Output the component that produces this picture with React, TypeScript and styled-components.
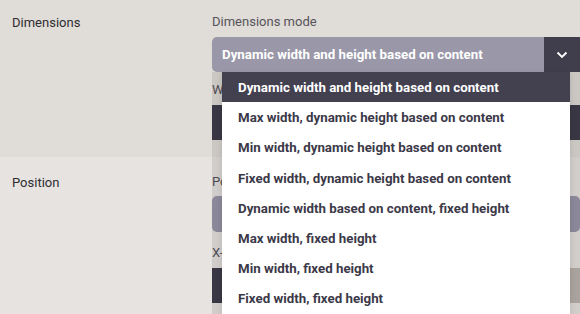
import React from "react";
import styled, { createGlobalStyle } from "styled-components";

const Global = createGlobalStyle`
  html, body { margin: 0; padding: 0; }
  body { font-family: Roboto, "Noto Sans", sans-serif; background: #e7e3e0; }
`;

const Page = styled.div`
  position: relative;
  width: 580px;
  height: 314px;
  overflow: hidden;
`;

const Section = styled.section<{ $bg: string; $pt: number }>`
  display: grid;
  grid-template-columns: 200px 1fr;
  background: ${(p) => p.$bg};
  padding: ${(p) => p.$pt}px 0 17px 12px;
`;

const SectionTitle = styled.div`
  font-size: 13px;
  line-height: 16px;
  padding-top: 1px;
  color: #2e2d31;
`;

const Fields = styled.div`
  display: flex;
  flex-direction: column;
`;

const FieldLabel = styled.div<{ $mt?: number; $mb?: number }>`
  font-size: 13px;
  line-height: 16px;
  color: #56535b;
  margin-top: ${(p) => p.$mt ?? 0}px;
  margin-bottom: ${(p) => p.$mb ?? 7}px;
`;

const SelectWrap = styled.div`
  position: relative;
  z-index: 3;
`;

const SelectBox = styled.div`
  display: flex;
  height: 35px;
  border-radius: 5px 0 0 5px;
  overflow: hidden;
`;

const SelectValue = styled.div`
  flex: 1;
  display: flex;
  align-items: center;
  padding-left: 10px;
  background: #9a97a9;
  color: #ffffff;
  font-size: 13.3px;
  font-weight: 700;
`;

const Chevron = styled.div`
  width: 36px;
  display: flex;
  align-items: center;
  justify-content: center;
  background: #403d4c;
`;

const Menu = styled.ul`
  position: absolute;
  top: 100%;
  left: 10px;
  right: 10px;
  margin: 0;
  padding: 0;
  list-style: none;
  background: #ffffff;
  box-shadow: 0 2px 6px rgba(0, 0, 0, 0.12);
`;

const MenuItem = styled.li<{ $active?: boolean }>`
  height: 30.2px;
  box-sizing: border-box;
  padding-top: 1px;
  display: flex;
  align-items: center;
  padding-left: 16px;
  font-size: 13.3px;
  font-weight: 700;
  color: ${(p) => (p.$active ? "#ffffff" : "#3c3948")};
  background: ${(p) => (p.$active ? "#434050" : "transparent")};
`;

const DarkInput = styled.div`
  height: 35px;
  background: #403d4c;
  flex: 1 1 auto;
`;

const PositionSelect = styled.div`
  height: 36px;
  border-radius: 5px;
  background: #9a97a9;
`;

const InputRow = styled.div`
  display: flex;
  gap: 8px;
`;

const TaupeInput = styled.div`
  height: 35px;
  background: #bcb3ad;
  flex: 1 1 0;
`;

const XInput = styled(DarkInput)`
  flex: 1 1 0;
`;

const Scrim = styled.div`
  position: absolute;
  left: 212px;
  top: 72px;
  right: 0;
  bottom: 0;
  background: rgba(0, 0, 0, 0.095);
  z-index: 2;
`;

const options = [
  "Dynamic width and height based on content",
  "Max width, dynamic height based on content",
  "Min width, dynamic height based on content",
  "Fixed width, dynamic height based on content",
  "Dynamic width based on content, fixed height",
  "Max width, fixed height",
  "Min width, fixed height",
  "Fixed width, fixed height",
];

export default function App() {
  return (
    <Page>
      <Global />
      <Section $bg="#e0dcd8" $pt={14}>
        <SectionTitle>Dimensions</SectionTitle>
        <Fields>
          <FieldLabel>Dimensions mode</FieldLabel>
          <SelectWrap>
            <SelectBox>
              <SelectValue>Dynamic width and height based on content</SelectValue>
              <Chevron>
                <svg width="12" height="8" viewBox="0 0 12 8">
                  <path d="M1.5 1.5 L6 6 L10.5 1.5" fill="none" stroke="#fff" strokeWidth="1.8" />
                </svg>
              </Chevron>
            </SelectBox>
            <Menu>
              {options.map((o, i) => (
                <MenuItem key={o} $active={i === 0}>
                  {o}
                </MenuItem>
              ))}
            </Menu>
          </SelectWrap>
          <FieldLabel $mt={10}>Width</FieldLabel>
          <DarkInput />
        </Fields>
      </Section>
      <Section $bg="#e7e3e0" $pt={17}>
        <SectionTitle>Position</SectionTitle>
        <Fields>
          <FieldLabel $mb={6}>Position mode</FieldLabel>
          <PositionSelect />
          <FieldLabel $mt={13}>X-position</FieldLabel>
          <InputRow>
            <XInput />
            <TaupeInput />
          </InputRow>
        </Fields>
      </Section>
      <Scrim />
    </Page>
  );
}
